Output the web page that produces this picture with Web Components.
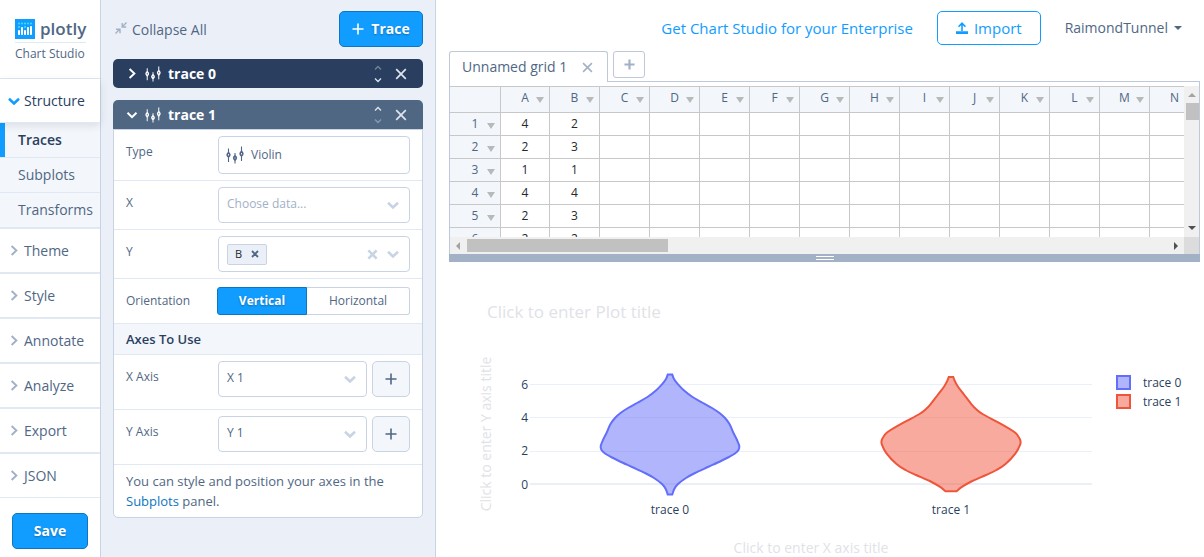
<!DOCTYPE html>
<html lang="en">
<head>
<meta charset="utf-8">
<title>Chart Studio</title>
<style>
  html, body { margin: 0; height: 100%; }
  body {
    font-family: "Open Sans", sans-serif; font-size: 14px; line-height: 20px; color: #506784; background: #fff; overflow: hidden;
    --blue: #119dff; --blue-edge: #0d76bf; --line: #c8d4e3; --line-soft: #dfe8f3; --slate: #506784; --navy: #2a3f5f; --pale: #f3f6fa; --haze: #ebf0f8; --steel: #a2b1c6;
  }
</style>
</head>
<body>
<chart-studio></chart-studio>

<script>
const ICONS = {
  down: '<svg viewBox="0 0 12 12"><path d="M1.5 3.8 6 8.2l4.500-4.400" fill="none" stroke="currentColor" stroke-width="2"/></svg>',
  thickdown: '<svg viewBox="0 0 12 12"><path d="M1 3.800 6 8.400l5-4.600" fill="none" stroke="currentColor" stroke-width="2.600"/></svg>',
  right: '<svg viewBox="0 0 12 12"><path d="M3.600 1 8.400 5.500l-4.800 4.500" fill="none" stroke="currentColor" stroke-width="1.900"/></svg>',
  cross: '<svg viewBox="0 0 12 12"><path d="M1.200 1.200l9.600 9.600M10.800 1.200 1.200 10.800" fill="none" stroke="currentColor" stroke-width="1.700"/></svg>',
  boldcross: '<svg viewBox="0 0 12 12"><path d="M1.500 1.500l9 9M10.500 1.500l-9 9" fill="none" stroke="currentColor" stroke-width="2.800"/></svg>',
  plus: '<svg viewBox="0 0 12 12"><path d="M6 .5v11M.5 6h11" fill="none" stroke="currentColor" stroke-width="1.600"/></svg>',
  boldplus: '<svg viewBox="0 0 12 12"><path d="M6 .5v11M.5 6h11" fill="none" stroke="currentColor" stroke-width="2.400"/></svg>',
  violin: '<svg viewBox="0 0 18 18"><g fill="none" stroke="currentColor" stroke-width="1.100"><path d="M2.500 2.500v4M2.500 11v5M9 7v3M9 14v3.500M15.500 .5v5M15.500 10v5"/><path stroke-width="1.600" d="M2.500 6.500c1.800 1.600 1.800 3 0 4.500-1.800-1.500-1.800-2.900 0-4.500zM9 10c1.800 1.400 1.800 2.600 0 4-1.800-1.400-1.800-2.600 0-4zM15.500 5.300c1.800 1.600 1.800 3.200 0 4.700-1.800-1.500-1.800-3.100 0-4.700z"/></g></svg>',
  collapse: '<svg viewBox="0 0 12 12"><g fill="none" stroke="currentColor" stroke-width="1.400"><path d="M.5 11.500 4.500 7.500M1 7.200h4v4M11.500.5l-4 4M7.200 1v4h4"/></g></svg>',
  upload: '<svg viewBox="0 0 12 12"><path fill="currentColor" d="M6 0l4 4.200-1.100 1L6.800 3.200V9H5.200V3.200L3.100 5.200 2 4.200zM0 9.200h12V12H0z"/></svg>',
  caret: '<svg viewBox="0 0 8 4"><path fill="currentColor" d="M0 0h8L4 4z"/></svg>',
  logo: '<svg viewBox="0 0 20 20"><path fill="#119dff" d="M0 0h20v20H0z"/><g fill="#fff"><rect x="3" y="11" width="2" height="5" rx=".8"/><rect x="6" y="8" width="2" height="8" rx=".8"/><rect x="9" y="11" width="2" height="5" rx=".8"/><rect x="12" y="8" width="2" height="8" rx=".8"/><rect x="15" y="7" width="2" height="9" rx=".8"/></g><g fill="#3de3f5"><circle cx="4" cy="4.500" r="1"/><circle cx="7" cy="4.500" r="1"/><circle cx="10" cy="4.500" r="1"/><circle cx="13" cy="4.500" r="1"/><circle cx="16" cy="4.500" r="1"/><circle cx="4" cy="8" r="1"/><circle cx="10" cy="8" r="1"/></g></svg>'
};

function define(name, css, html, setup) {
  const template = document.createElement('template');
  template.innerHTML = `<style>*{box-sizing:border-box}${css}</style>${html}`;
  customElements.define(name, class extends HTMLElement {
    constructor() {
      super();
      this.attachShadow({ mode: 'open' }).append(template.content.cloneNode(true));
    }
    connectedCallback() { if (setup) setup(this, this.shadowRoot); }
  });
}

define('ui-icon', `
  :host { display: inline-block; flex: none; width: 12px; height: 12px; }
  svg { display: block; width: 100%; height: 100%; overflow: visible; }
  span { display: contents; }
`, '<span></span>', (host, root) => { root.querySelector('span').innerHTML = ICONS[host.getAttribute('name')]; });

define('primary-button', `
  :host { display: inline-block; }
  button { width: 100%; height: 36px; display: flex; align-items: center; justify-content: center; gap: 7px; padding: 0 12px; font: 700 14px/20px "Open Sans", sans-serif; color: #fff; background: var(--blue); border: 1px solid var(--blue-edge); border-radius: 5px; text-shadow: 0 1px 2px rgba(0,0,0,.3); }
`, '<button type="button"><slot></slot></button>');

define('nav-section', `
  :host { display: block; border-bottom: 2px solid var(--line-soft); }
  button { width: 100%; height: 43px; display: flex; align-items: center; gap: 4px; padding: 0 0 0 8px; font: 14px/20px "Open Sans", sans-serif; color: var(--slate); background: none; border: 0; text-align: left; }
  ui-icon { color: var(--steel); }
  ui-icon[name=thickdown] { display: none; color: var(--blue); }
  :host([open]) ui-icon[name=right] { display: none; }
  :host([open]) ui-icon[name=thickdown] { display: block; }
  :host([open]) button { color: var(--navy); box-shadow: 0 1px 0 var(--line-soft), 0 3px 8px rgba(42,63,95,.14); position: relative; }
  .items { background: var(--pale); }
  :host([open]) .items { padding-top: 1px; }
`, '<button type="button"><ui-icon name="right"></ui-icon><ui-icon name="thickdown"></ui-icon><span></span></button><div class="items"><slot></slot></div>',
(host, root) => {
  root.querySelector('span').textContent = host.getAttribute('label');
  root.querySelector('button').setAttribute('aria-expanded', host.hasAttribute('open'));
});

define('nav-link', `
  :host { display: block; border-bottom: 1px solid var(--line-soft); }
  :host(:last-of-type) { border-bottom: 0; }
  a { display: flex; align-items: center; height: 34px; padding-left: 13px; border-left: 5px solid transparent; color: var(--slate); text-decoration: none; }
  :host([current]) a { color: var(--navy); font-weight: 600; border-left-color: var(--blue); }
`, '<a href="#"><slot></slot></a>');

define('side-nav', `
  :host { display: flex; flex-direction: column; width: 101px; flex: none; background: #fff; border-right: 1px solid var(--line); }
  .brand { display: block; flex: none; height: 79px; padding: 19px 14px 0 15px; border-bottom: 1px solid var(--line-soft); color: var(--slate); text-decoration: none; }
  .name { display: flex; align-items: center; gap: 5px; height: 24px; padding-bottom: 3px; border-bottom: 1px solid var(--line-soft); font-weight: 600; font-size: 17px; line-height: 18px; }
  .name ui-icon { width: 20px; height: 20px; }
  .sub { font-size: 12px; line-height: 22px; white-space: nowrap; }
  nav { flex: none; }
  nav-section:last-of-type { border-bottom-width: 1px; }
  primary-button { margin: 15px 12px; }
`, `
  <a class="brand" href="#"><div class="name"><ui-icon name="logo"></ui-icon>plotly</div><div class="sub">Chart Studio</div></a>
  <nav>
    <nav-section label="Structure" open><nav-link current>Traces</nav-link><nav-link>Subplots</nav-link><nav-link>Transforms</nav-link></nav-section>
    <nav-section label="Theme"></nav-section><nav-section label="Style"></nav-section><nav-section label="Annotate"></nav-section>
    <nav-section label="Analyze"></nav-section><nav-section label="Export"></nav-section><nav-section label="JSON"></nav-section>
  </nav>
  <primary-button>Save</primary-button>`);

define('trace-fold', `
  :host { display: block; margin-bottom: 12px; }
  header { display: flex; align-items: center; height: 29px; padding: 0 16px 0 13px; gap: 8px; background: var(--navy); border-radius: 5px; color: #fff; }
  :host([open]) header { background: var(--slate); border-radius: 5px 5px 0 0; }
  button { padding: 0; border: 0; background: none; color: inherit; font: inherit; display: flex; align-items: center; gap: 7px; }
  .title { flex: 1; font-weight: 700; }
  .title ui-icon[name=violin] { width: 16px; height: 16px; }
  .move { display: flex; flex-direction: column; gap: 4px; margin-right: 4px; }
  .move ui-icon { width: 10px; height: 8px; }
  .move, .close { color: #dfe5ee; }
  .up ui-icon { rotate: 180deg; }
  :host(:not([open])) .up, :host([open]) .dn { opacity: .4; }
  .body { border: 1px solid var(--line); border-radius: 0 0 5px 5px; background: #fff; overflow: hidden; }
  :host(:not([open])) .body { display: none; }
`, `
  <header>
    <button class="title" type="button"><ui-icon class="state"></ui-icon><ui-icon name="violin"></ui-icon><span></span></button>
    <div class="move"><button class="up" type="button" aria-label="Move up"><ui-icon name="down"></ui-icon></button><button class="dn" type="button" aria-label="Move down"><ui-icon name="down"></ui-icon></button></div>
    <button class="close" type="button" aria-label="Delete trace"><ui-icon name="cross"></ui-icon></button>
  </header>
  <div class="body"><slot></slot></div>`,
(host, root) => {
  root.querySelector('.state').outerHTML = `<ui-icon name="${host.hasAttribute('open') ? 'down' : 'right'}"></ui-icon>`;
  root.querySelector('span').textContent = host.getAttribute('label');
});

define('trace-form', `
  :host { display: block; font-size: 12px; }
  .row { display: grid; grid-template-columns: 92px minmax(0, 1fr); padding: 6px 12px; border-bottom: 1px solid var(--line-soft); }
  .row > label, .row > .label { padding-top: 6px; }
  .axis { padding-bottom: 12px; }
  .axis .ctl { display: grid; grid-template-columns: minmax(0, 1fr) 38px; gap: 5px; }
  .box, select { width: 100%; height: 36px; border: 1px solid var(--line); border-radius: 4px; background: #fff; font: 12px/20px "Open Sans", sans-serif; color: var(--slate); }
  .type { height: 38px; display: flex; align-items: center; gap: 7px; padding: 0 7px; }
  .type ui-icon { width: 18px; height: 18px; }
  .pick { display: grid; align-items: center; }
  .pick > * { grid-area: 1 / 1; }
  select { appearance: none; padding: 0 32px 2px 8px; }
  select.empty { color: var(--steel); }
  .pick ui-icon { justify-self: end; margin-right: 11px; color: var(--line); pointer-events: none; }
  .multi { display: flex; align-items: center; gap: 9px; padding: 0 10px 0 8px; color: var(--line); }
  .multi input { flex: 1; min-width: 0; border: 0; padding: 0; outline: 0; background: none; font: inherit; }
  .multi button, .chip button { border: 0; padding: 0; background: none; color: inherit; display: flex; }
  .chip { display: flex; align-items: center; gap: 9px; height: 21px; padding: 0 7px; border: 1px solid var(--line); border-radius: 2px; background: var(--haze); color: #24292f; font-size: 11px; }
  .chip ui-icon { width: 8px; height: 8px; color: var(--slate); }
  .multi .clear ui-icon { width: 11px; height: 11px; }
  .add { height: 36px; display: flex; align-items: center; justify-content: center; padding: 0; border: 1px solid var(--line); border-radius: 5px; background: var(--pale); color: var(--slate); }
  .orient { grid-template-columns: 91px minmax(0, 1fr); padding: 8px 12px; }
  .orient > .label { padding-top: 4px; }
  .seg { display: grid; grid-template-columns: 90px minmax(0, 1fr); height: 28px; }
  .seg label { display: flex; align-items: center; justify-content: center; border: 1px solid var(--line); border-radius: 0 3px 3px 0; border-left: 0; }
  .seg label:has(:checked) { background: var(--blue); border: 1px solid var(--blue-edge); border-radius: 3px 0 0 3px; color: #fff; font-weight: 700; text-shadow: 0 1px 2px rgba(0,0,0,.3); }
  .seg input { appearance: none; margin: 0; width: 0; height: 0; }
  h3 { margin: 0; height: 31px; padding: 5px 12px; border-bottom: 1px solid var(--line-soft); background: var(--pale); font-size: 13px; line-height: 20px; font-weight: 600; color: var(--navy); }
  p { margin: 0; padding: 6px 12px; font-size: 13px; line-height: 20px; }
  a { color: var(--blue-edge); text-decoration: none; }
`, `
  <div class="row"><label for="type">Type</label><button id="type" class="box type" type="button"><ui-icon name="violin"></ui-icon>Violin</button></div>
  <div class="row"><label for="x">X</label><div class="pick"><select id="x" class="empty"><option>Choose data...</option></select><ui-icon name="thickdown"></ui-icon></div></div>
  <div class="row"><label for="y">Y</label><div class="box multi"><span class="chip">B<button type="button" aria-label="Remove B"><ui-icon name="boldcross"></ui-icon></button></span><input id="y" type="text"><button class="clear" type="button" aria-label="Clear"><ui-icon name="boldcross"></ui-icon></button><ui-icon name="thickdown"></ui-icon></div></div>
  <div class="row orient"><span class="label" id="ori">Orientation</span><div class="seg" role="radiogroup" aria-labelledby="ori"><label><input type="radio" name="o" checked>Vertical</label><label><input type="radio" name="o">Horizontal</label></div></div>
  <h3>Axes To Use</h3>
  <div class="row axis"><label for="xa">X Axis</label><div class="ctl"><div class="pick"><select id="xa"><option>X 1</option></select><ui-icon name="thickdown"></ui-icon></div><button class="add" type="button" aria-label="Add X axis"><ui-icon name="plus"></ui-icon></button></div></div>
  <div class="row axis"><label for="ya">Y Axis</label><div class="ctl"><div class="pick"><select id="ya"><option>Y 1</option></select><ui-icon name="thickdown"></ui-icon></div><button class="add" type="button" aria-label="Add Y axis"><ui-icon name="plus"></ui-icon></button></div></div>
  <p>You can style and position your axes in the <a href="#">Subplots</a> panel.</p>`);

define('trace-panel', `
  :host { display: block; width: 335px; flex: none; padding: 11px 12px; background: var(--haze); border-right: 1px solid var(--line); overflow: hidden; }
  .bar { display: flex; justify-content: space-between; align-items: center; margin-bottom: 12px; }
  .fold { display: flex; align-items: center; gap: 5px; border: 0; padding: 1px 0 0 2px; background: none; font: inherit; color: var(--slate); }
  .fold ui-icon { color: var(--steel); margin-bottom: 4px; }
  primary-button { width: 84px; }
`, `
  <div class="bar"><button class="fold" type="button"><ui-icon name="collapse"></ui-icon>Collapse All</button><primary-button><ui-icon name="plus"></ui-icon>Trace</primary-button></div>
  <trace-fold label="trace 0"></trace-fold>
  <trace-fold label="trace 1" open><trace-form></trace-form></trace-fold>`);

define('top-bar', `
  :host { display: flex; justify-content: flex-end; align-items: center; gap: 24px; height: 51px; padding: 5px 18px 0 0; }
  a { color: var(--blue); text-decoration: none; font-size: 15px; }
  .import { display: flex; align-items: center; gap: 6px; height: 34px; padding: 0 18px; font: 15px/20px "Open Sans", sans-serif; color: var(--blue); background: #fff; border: 1px solid var(--blue); border-radius: 5px; }
  .user { display: flex; align-items: center; gap: 6px; border: 0; padding: 0; background: none; font: 14px/20px "Open Sans", sans-serif; color: var(--slate); }
  .user ui-icon { width: 8px; height: 4px; }
`, `
  <a href="#">Get Chart Studio for your Enterprise</a>
  <button class="import" type="button"><ui-icon name="upload"></ui-icon>Import</button>
  <button class="user" type="button">RaimondTunnel<ui-icon name="caret"></ui-icon></button>`);

define('data-grid', `
  :host { display: block; --edge: #bec8d9; --cell: #c8c8c8; }
  .tabs { display: flex; align-items: flex-start; height: 31px; }
  .tab { display: flex; align-items: center; justify-content: space-between; width: 159px; height: 31px; padding: 0 14px 0 12px; border: 1px solid var(--edge); border-bottom: 0; border-radius: 3px 3px 0 0; }
  .tab ui-icon { width: 11px; height: 11px; }
  .rest { flex: 1; align-self: stretch; border-bottom: 1px solid var(--edge); padding-left: 5px; }
  button { border: 0; padding: 0; background: none; color: var(--steel); display: flex; align-items: center; justify-content: center; }
  .new { width: 32px; height: 27px; border: 1px solid var(--edge); border-radius: 3px; }
  .new ui-icon { width: 11px; height: 11px; }
  .frame { display: grid; grid-template: 151px 17px / minmax(0, 1fr) 15px; padding-top: 4px; border: 1px solid var(--edge); border-width: 0 1px; height: 172px; }
  .view { overflow: hidden; }
  table { border-collapse: separate; border-spacing: 0; table-layout: fixed; width: 750px; font-size: 12px; border-top: 1px solid var(--cell); }
  col { width: 50px; } .c0 { width: 51px; } .c1 { width: 49px; }
  th, td { height: 23px; padding: 0; font-weight: 400; text-align: center; border: 0 solid var(--cell); border-width: 0 1px 1px 0; line-height: 20px; color: #24292f; }
  th { background: var(--pale); color: var(--slate); }
  thead th { height: 26px; padding-bottom: 3px; }
  .h { display: grid; grid-template-columns: 1fr auto 1fr; align-items: center; }
  .h i { grid-column: 3; justify-self: end; margin: 4px 5px 0 0; width: 0; height: 0; border: 4px solid transparent; border-width: 6px 4px 0; border-top-color: #b9b9b9; }
  .h span { grid-column: 2; }
  .v, .s { background: #f0f0f0; display: flex; align-items: center; }
  .v { flex-direction: column; }
  .v i, .s i { width: 0; height: 0; border: 4px solid transparent; }
  .v b { width: 13px; height: 17px; margin: 6px 0 auto 2px; background: #c1c1c1; }
  .s b { width: 201px; height: 13px; margin: 0 auto 0 7px; background: #c1c1c1; }
  .v .a { margin-top: 7px; border-width: 0 4px 4px; border-bottom-color: #a3a3a3; }
  .v .z { margin-bottom: 7px; border-width: 4px 4px 0; border-top-color: #505050; }
  .s .a { margin-left: 6px; border-width: 4px 4px 4px 0; border-right-color: #a3a3a3; }
  .s .z { margin-right: 6px; border-width: 4px 0 4px 4px; border-left-color: #505050; }
  .corner { background: #dcdcdc; }
  .split { display: flex; justify-content: center; height: 8px; padding-top: 2px; background: var(--steel); }
  .split i { width: 18px; height: 4px; border: 1px solid #fff; border-width: 1px 0; }
`, `
  <div class="tabs"><div class="tab"><span>Unnamed grid 1</span><button type="button" aria-label="Close grid"><ui-icon name="cross"></ui-icon></button></div><div class="rest"><button class="new" type="button" aria-label="Add grid"><ui-icon name="boldplus"></ui-icon></button></div></div>
  <div class="frame">
    <div class="view"><table><colgroup><col class="c0"><col class="c1"></colgroup><thead></thead><tbody></tbody></table></div>
    <div class="v"><i class="a"></i><b></b><i class="z"></i></div>
    <div class="s"><i class="a"></i><b></b><i class="z"></i></div><div class="corner"></div>
  </div>
  <div class="split"><i></i></div>`,
(host, root) => {
  const letters = [...'ABCDEFGHIJKLMN'];
  const data = [[4, 2], [2, 3], [1, 1], [4, 4], [2, 3], [2, 2]];
  const head = t => `<div class="h"><span>${t}</span><i></i></div>`;
  root.querySelector('colgroup').innerHTML += '<col>'.repeat(letters.length - 1);
  root.querySelector('thead').innerHTML = '<tr><th></th>' + letters.map(l => `<th scope="col">${head(l)}</th>`).join('') + '</tr>';
  root.querySelector('tbody').innerHTML = data.map((r, n) => `<tr><th scope="row">${head(n + 1)}</th>` + letters.map((l, c) => `<td>${r[c] ?? ''}</td>`).join('') + '</tr>').join('');
});

// Each violin is a centre x and a list of [y, half width] samples of its density.
const VIOLINS = [
  { x: 221, color: '#636efa', name: 'trace 0', points: [[112.5, 2.3], [117, 4], [122.300, 8], [128, 13.500], [135, 22.500], [141, 33], [146, 42], [151, 49.500], [156, 55], [162, 59.500], [171, 63.500], [178, 67], [184, 69.300], [188, 68.500], [191.500, 65], [195, 59], [199, 51], [205, 38], [211, 25], [216, 16], [222, 8], [227, 4.300], [232.500, 2.300]] },
  { x: 502, color: '#ef553b', name: 'trace 1', points: [[115, 2.300], [119, 3.800], [124.700, 7], [133, 13.300], [142.300, 20.500], [147, 25], [152, 31.500], [161.300, 49], [169.700, 63], [174, 67], [178, 69.200], [182.300, 69.200], [191.300, 64.500], [202, 54.500], [208, 45.500], [213, 35], [219, 21.300], [224.700, 11.300], [229.300, 5.500]] }
];
function spline(p) {
  let d = '';
  for (let i = 0; i < p.length - 1; i++) {
    const a = p[i - 1] || p[i], b = p[i], c = p[i + 1], e = p[i + 2] || c;
    d += `C${b[0] + (c[0] - a[0]) / 6} ${b[1] + (c[1] - a[1]) / 6} ${c[0] - (e[0] - b[0]) / 6} ${c[1] - (e[1] - b[1]) / 6} ${c[0]} ${c[1]}`;
  }
  return d;
}
define('violin-chart', `
  :host { display: block; min-height: 0; flex: 1; }
  svg { display: block; width: 100%; height: 100%; }
  text { font-family: "Open Sans", sans-serif; font-size: 12px; fill: var(--navy); }
  .hint { fill: #dfe2e7; font-size: 14px; }
  .title { font-size: 17px; }
`, `<svg viewBox="0 0 751 295" preserveAspectRatio="xMidYMin meet" role="img" aria-label="Violin chart">
  <text class="hint title" x="38" y="56">Click to enter Plot title</text>
  <text class="hint" text-anchor="middle" transform="translate(42 172) rotate(-90)">Click to enter Y axis title</text>
  <text class="hint" text-anchor="middle" x="362" y="291">Click to enter X axis title</text>
  <g fill="#ebf0f8"><path d="M81 122h562v1H81zM81 155h562v1H81zM81 189h562v1H81zM81 221h562v2H81z"/></g>
  <g text-anchor="end"><text x="79" y="127">6</text><text x="79" y="160">4</text><text x="79" y="193">2</text><text x="79" y="227">0</text></g>
  <g class="traces"></g></svg>`,
(host, root) => {
  root.querySelector('.traces').innerHTML = VIOLINS.map((v, i) => {
    const right = v.points.map(([y, w]) => [v.x + w, y]);
    const left = v.points.map(([y, w]) => [v.x - w, y]).reverse();
    const y = 114 + i * 19;
    return `<path d="M${right[0]}${spline(right)}L${left[0]}${spline(left)}Z" fill="${v.color}" fill-opacity=".5" stroke="${v.color}" stroke-width="2"/>
      <text text-anchor="middle" x="${v.x}" y="252">${v.name}</text>
      <rect x="668" y="${y}" width="13" height="13" fill="${v.color}" fill-opacity=".5" stroke="${v.color}" stroke-width="2"/>
      <text x="694" y="${y + 11}">${v.name}</text>`;
  }).join('');
});

define('chart-studio', `
  :host { display: flex; height: 100vh; }
  main { flex: 1; min-width: 0; display: flex; flex-direction: column; padding: 0 4px 0 13px; }
`, '<side-nav></side-nav><trace-panel></trace-panel><main><top-bar></top-bar><data-grid></data-grid><violin-chart></violin-chart></main>');
</script>
</body>
</html>
